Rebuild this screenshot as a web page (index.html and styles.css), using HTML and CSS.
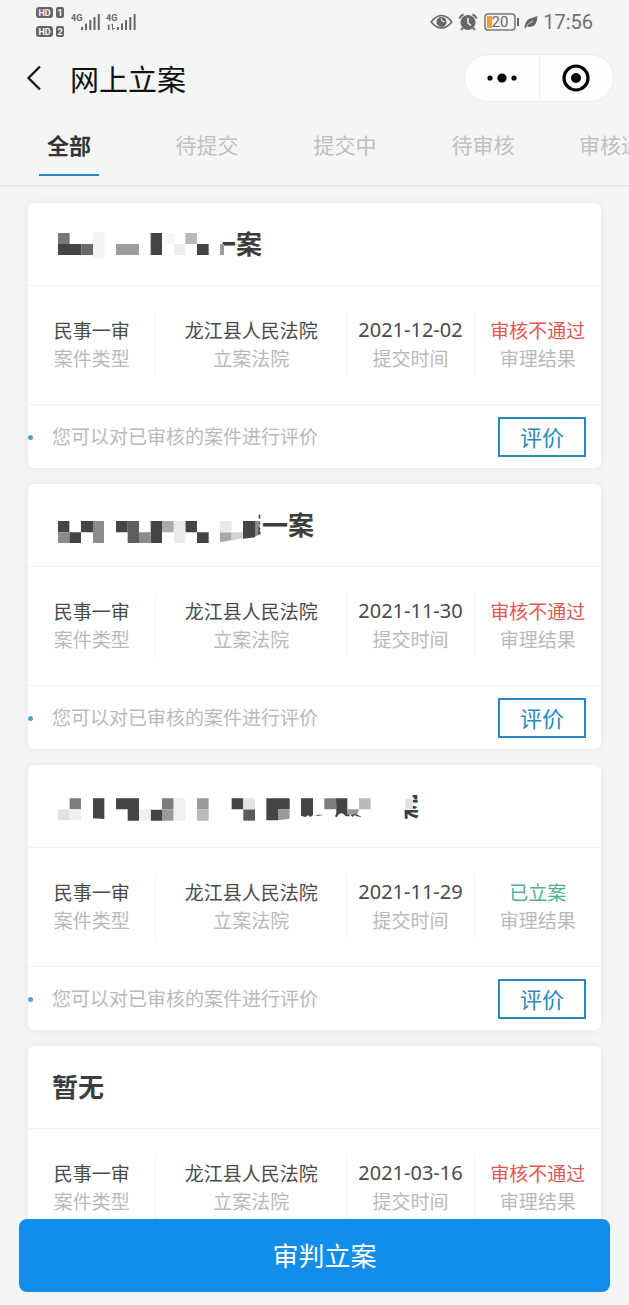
FILE: index.html
```html
<!DOCTYPE html>
<html lang="zh-CN">
<head>
  <meta charset="UTF-8">
  <meta name="viewport" content="width=device-width, initial-scale=1">
  <title>网上立案</title>
  <link rel="stylesheet" href="styles.css">
</head>
<body>
  <div class="status-bar">
    <svg class="status-left" width="102" height="32" viewBox="36 5 102 32" aria-hidden="true">
      <rect x="36" y="6" width="17" height="11" rx="3"/>
      <rect x="56" y="6" width="8" height="11" rx="2"/>
      <rect x="36" y="25" width="17" height="11" rx="3"/>
      <rect x="56" y="25" width="8" height="11" rx="2"/>
      <g class="badge-text">
        <text x="44.5" y="15">HD</text>
        <text x="60" y="15">1</text>
        <text x="44.5" y="34">HD</text>
        <text x="60" y="34">2</text>
      </g>
      <g class="net-text">
        <text x="71" y="20">4G</text>
        <text x="106" y="20">4G</text>
      </g>
      <path class="bars" d="M82 26v3M86 22.500v6.500M90.300 19v10M94.500 16v13M98.800 13v16"/>
      <path class="bars" d="M118 26v3M122 22.500v6.500M126 19v10M130.300 16v13M134.600 13v16"/>
      <path d="M107 25l2.500-2v6h-1.500v-4zM111.500 23h1.500v4h2l-2.500 2.500z"/>
    </svg>
    <div class="status-right">
      <svg width="23" height="16" viewBox="0 0 23 16" aria-hidden="true">
        <path d="M1.200 8Q6 1.500 11.500 1.500T21.800 8Q17 14 11.500 14T1.200 8z" fill="none" stroke="#666" stroke-width="1.600"/>
        <circle cx="11.500" cy="8" r="5"/>
        <path d="M11.500 4.500a2.500 2.500 0 0 0 3 3" fill="none" stroke="#f5f5f5" stroke-width="1.200"/>
      </svg>
      <svg width="20" height="18" viewBox="0 0 20 18" aria-hidden="true">
        <circle cx="10" cy="9.500" r="7.500"/>
        <path d="M1.500 5.500Q2.500 2.500 5.500 1.500M14.500 1.500Q17.500 2.500 18.500 5.500M5 14.500l-2 2.500M15 14.500l2 2.500" fill="none" stroke="#666" stroke-width="2"/>
        <path d="M10 5v5l3 2.500" fill="none" stroke="#f5f5f5" stroke-width="1.600"/>
      </svg>
      <svg class="battery" width="36" height="18" viewBox="0 0 36 18" aria-hidden="true">
        <rect x="2" y="1" width="30" height="16" rx="3" fill="none" stroke="#777" stroke-width="1.500"/>
        <rect x="4" y="3" width="5" height="12" fill="#eda13c"/>
        <rect x="34" y="5" width="2" height="8"/>
        <text x="17" y="14">20</text>
      </svg>
      <svg width="14" height="14" viewBox="0 0 14 14" aria-hidden="true">
        <path d="M13.500 1Q13 12 6 12Q4 12 3 11L1.500 13.500L.5 13Q1 5.500 6 3.500Q9 2.800 13.500 1z"/>
        <path d="M3 10.500Q5.500 7.500 9 6" fill="none" stroke="#f5f5f5" stroke-width=".8"/>
      </svg>
      <span class="clock">17:56</span>
    </div>
  </div>

  <header class="nav-bar">
    <button class="back" type="button" aria-label="返回">
      <svg width="16" height="26" viewBox="0 0 16 26"><path d="M14 1.500L2.500 13L14 24.500" fill="none" stroke="#111" stroke-width="2.200"/></svg>
    </button>
    <h1>网上立案</h1>
    <div class="capsule">
      <button type="button" aria-label="更多">
        <svg width="30" height="10" viewBox="0 0 30 10"><circle cx="3" cy="5" r="2.600"/><circle cx="15" cy="5" r="4.600"/><circle cx="27" cy="5" r="2.600"/></svg>
      </button>
      <button type="button" aria-label="关闭">
        <svg width="28" height="28" viewBox="0 0 28 28"><circle cx="14" cy="14" r="12" fill="none" stroke="#000" stroke-width="3.200"/><circle cx="14" cy="14" r="5"/></svg>
      </button>
    </div>
  </header>

  <nav class="tabs">
    <a href="#" class="tab active">全部</a>
    <a href="#" class="tab">待提交</a>
    <a href="#" class="tab">提交中</a>
    <a href="#" class="tab">待审核</a>
    <a href="#" class="tab">审核通过</a>
  </nav>

  <main class="case-list">
    <article class="card">
      <h2 class="card-title">
        <svg class="mask" width="170" height="36" viewBox="96 90 510 108" aria-hidden="true">
          <rect x="96" y="90" width="512" height="108" fill="#fff"/>
          <path fill="#777" d="M114 114h35v33h-35z"/>
          <path fill="#444" d="M114 147h70v33h-70zM392 114h34v66h-34zM531 147h35v33h-35z"/>
          <path fill="#686868" d="M184 147h35v33h-35z"/>
          <path fill="#f5f5f5" d="M219 110h35v80h-35zM440 114h22v33h-22z"/>
          <path fill="#9d9d9d" d="M288 147h69v33h-69zM600 147h12v33h-12z"/>
          <path fill="#b8b8b8" d="M496 114h35v33h-35z"/>
          <path fill="#eee" d="M462 147h34v33h-34z"/>
        </svg>
        <span>一案</span>
      </h2>
      <dl class="info">
        <div class="cell"><dd>民事一审</dd><dt>案件类型</dt></div>
        <div class="cell"><dd>龙江县人民法院</dd><dt>立案法院</dt></div>
        <div class="cell"><dd class="date">2021-12-02</dd><dt>提交时间</dt></div>
        <div class="cell"><dd class="rejected">审核不通过</dd><dt>审理结果</dt></div>
      </dl>
      <div class="card-footer">
        <p>您可以对已审核的案件进行评价</p>
        <button class="rate" type="button">评价</button>
      </div>
    </article>

    <article class="card">
      <h2 class="card-title">
        <svg class="mask" width="222" height="36" viewBox="96 78 666 108" aria-hidden="true">
          <path fill="#444" d="M114 123h34v34h-34zM148 157h35v32h-35zM183 123h36v34h-36zM288 123h35v34h-35zM392 123h34v66h-34zM496 123h35v34h-35zM531 157h35v32h-35zM669 123h36v49l-36 4z"/>
          <path fill="#8b8b8b" d="M114 157h34v32h-34zM219 123h33v66h-33zM357 157h35v32h-35zM705 123h14v40l-14 7z"/>
          <path fill="#5d5d5d" d="M323 123h34v66h-34z"/>
          <path fill="#aaa" d="M426 123h35v34h-35zM600 157h35v24l-35 6z"/>
          <path fill="#eaeaea" d="M462 123h34v66h-34zM600 123h35v34h-35z"/>
          <path fill="#d2d2d2" d="M635 157h34v18l-34 6z"/>
          <path fill="#444" d="M716 104h5v12h-5zM717 124l5 6-5 4zM716 138l6 8-4 4 5 10-8 6z"/>
        </svg>
        <span>一案</span>
      </h2>
      <dl class="info">
        <div class="cell"><dd>民事一审</dd><dt>案件类型</dt></div>
        <div class="cell"><dd>龙江县人民法院</dd><dt>立案法院</dt></div>
        <div class="cell"><dd class="date">2021-11-30</dd><dt>提交时间</dt></div>
        <div class="cell"><dd class="rejected">审核不通过</dd><dt>审理结果</dt></div>
      </dl>
      <div class="card-footer">
        <p>您可以对已审核的案件进行评价</p>
        <button class="rate" type="button">评价</button>
      </div>
    </article>

    <article class="card">
      <h2 class="card-title">
        <svg class="mask" width="353" height="36" viewBox="96 81 1059 108" aria-hidden="true">
          <path fill="#fff" d="M96 81h1082v69h-24v42h-1058z"/>
          <path fill="#444" d="M219 115h34v62l-34-2zM288 115h69v67h-34v-34h-35zM392 149h34v33h-34zM635 115h35v33h-35zM739 115h70v33h-35v33h-35zM843 115h36v50l-8 6-7-5-8 5-13-4zM948 115h34v40l8 14h-12l-12-10-10 4-6 9-5-3 4-10z"/>
          <path fill="#7d7d7d" d="M149 115h34v33h-34zM426 115h35v33h-35zM913 115h35v33h-35z"/>
          <path fill="#999" d="M426 148h35v34h-35zM531 115h35v33h-35zM774 148h35v28l-35 5zM982 148h35l-5 16h-30z"/>
          <path fill="#5b5b5b" d="M670 148h35v34h-35z"/>
          <path fill="#bababa" d="M531 148h35v34h-35zM1017 115h35v33h-35z"/>
          <path fill="#e2e2e2" d="M114 148h35v33h-35zM670 115h35v33h-35zM1156 116h22v32h-22z"/>
          <path fill="#f0f0f0" d="M149 148h34v33h-34zM357 148h35v33h-35zM461 115h35v67h-35z"/>
          <path fill="#444" d="M886 166l14-2 10 1-18 3zM992 166l12-4 8 2 14 7-16-2-6-4-6 6z"/>
        </svg>
        <span>案</span>
      </h2>
      <dl class="info">
        <div class="cell"><dd>民事一审</dd><dt>案件类型</dt></div>
        <div class="cell"><dd>龙江县人民法院</dd><dt>立案法院</dt></div>
        <div class="cell"><dd class="date">2021-11-29</dd><dt>提交时间</dt></div>
        <div class="cell"><dd class="accepted">已立案</dd><dt>审理结果</dt></div>
      </dl>
      <div class="card-footer">
        <p>您可以对已审核的案件进行评价</p>
        <button class="rate" type="button">评价</button>
      </div>
    </article>

    <article class="card">
      <h2 class="card-title">暂无</h2>
      <dl class="info">
        <div class="cell"><dd>民事一审</dd><dt>案件类型</dt></div>
        <div class="cell"><dd>龙江县人民法院</dd><dt>立案法院</dt></div>
        <div class="cell"><dd class="date">2021-03-16</dd><dt>提交时间</dt></div>
        <div class="cell"><dd class="rejected">审核不通过</dd><dt>审理结果</dt></div>
      </dl>
    </article>
  </main>

  <footer class="bottom-bar">
    <button class="submit" type="button">审判立案</button>
  </footer>
</body>
</html>
```
FILE: styles.css
```css
:root {
  --page: #f5f5f5;
  --line: #f3f3f3;
  --blue: #2b87bd;
  --muted: #b9b9b9;
}
* {
  box-sizing: border-box;
}
body {
  margin: 0;
  height: 100vh;
  display: flex;
  flex-direction: column;
  overflow: hidden;
  background: var(--page);
  color: #4a4a4a;
  font-family: "Noto Sans CJK SC", sans-serif;
}
h1, h2, p, dl, dd {
  margin: 0;
}
button {
  padding: 0;
  border: none;
  background: none;
  font-family: inherit;
  cursor: pointer;
}
svg {
  display: block;
  flex: none;
}

/* status bar */
.status-bar {
  flex: none;
  display: flex;
  justify-content: space-between;
  align-items: center;
  height: 43px;
  padding: 0 36px;
  fill: #666;
}
.badge-text {
  fill: var(--page);
  font: bold 9px Roboto, sans-serif;
  text-anchor: middle;
}
.net-text {
  font: bold 9px Roboto, sans-serif;
}
.bars {
  stroke: #666;
  stroke-width: 2;
}
.status-right {
  display: flex;
  align-items: center;
  gap: 5px;
}
.battery text {
  font: 15px Roboto, sans-serif;
  text-anchor: middle;
}
.clock {
  color: #707070;
  font: 20px/24px Roboto, sans-serif;
}

/* title bar */
.nav-bar {
  flex: none;
  display: flex;
  align-items: center;
  height: 70px;
  padding: 0 15px 0 26px;
}
.nav-bar h1 {
  margin-left: 28px;
  color: #111;
  font-size: 29px;
  line-height: 40px;
  font-weight: 400;
}
.capsule {
  display: flex;
  width: 150px;
  height: 48px;
  margin-left: auto;
  border: 1px solid #ebebeb;
  border-radius: 24px;
  background: #fefefe;
}
.capsule button {
  flex: 1;
  display: flex;
  align-items: center;
  justify-content: center;
}
.capsule button + button {
  border-left: 1px solid #f0f0f0;
}

/* tabs */
.tabs {
  flex: none;
  display: flex;
  overflow: hidden;
  padding-bottom: 9px;
  border-bottom: 2px solid #e9e9e9;
}
.tab {
  position: relative;
  flex: 0 0 138px;
  padding: 16px 0 17px;
  color: #c0c0c0;
  font-size: 21px;
  line-height: 30px;
  text-align: center;
  text-decoration: none;
}
.tab.active {
  color: #333;
  font-size: 22px;
  font-weight: bold;
}
.tab.active::after {
  content: "";
  position: absolute;
  left: 50%;
  bottom: 0;
  width: 60px;
  height: 2px;
  margin-left: -30px;
  background: var(--blue);
}

/* cards */
.case-list {
  flex: 1;
  min-height: 0;
  overflow-y: auto;
  scrollbar-width: none;
  display: flex;
  flex-direction: column;
  gap: 16px;
  padding: 16px 28px 0;
}
.card {
  flex: none;
  border-radius: 6px;
  background: #fff;
  box-shadow: 0 0 8px rgba(0, 0, 0, 0.06);
}
.card-title {
  display: flex;
  padding: 22px 24px 24px;
  border-bottom: 1px solid var(--line);
  color: #3c3c3c;
  font-size: 26px;
  line-height: 36px;
  font-weight: bold;
}
.mask {
  position: relative;
  margin-right: -12px;
  overflow: visible;
}
.info {
  display: grid;
  grid-template-columns: 2fr 3fr 2fr 2fr;
  padding: 26px 0;
}
.cell {
  padding: 4px 0 6px;
  font-size: 19px;
  line-height: 28px;
  text-align: center;
  white-space: nowrap;
}
.cell + .cell {
  border-left: 1px solid var(--line);
}
.cell dt {
  color: var(--muted);
}
.cell .date {
  font-family: "Noto Sans", sans-serif;
  font-size: 20px;
}
.cell .rejected {
  color: #df5754;
}
.cell .accepted {
  color: #4db18c;
}
.card-footer {
  position: relative;
  display: flex;
  align-items: center;
  justify-content: space-between;
  height: 64px;
  padding: 0 15px 0 24px;
  border-top: 1px solid var(--line);
}
.card-footer::before {
  content: "";
  position: absolute;
  left: 0;
  top: 30px;
  width: 5px;
  height: 5px;
  border-radius: 50%;
  background: #4fa3d1;
}
.card-footer p {
  padding-bottom: 2px;
  color: var(--muted);
  font-size: 19px;
  line-height: 28px;
}
.rate {
  width: 88px;
  height: 40px;
  padding-bottom: 2px;
  border: 2px solid var(--blue);
  color: var(--blue);
  font-size: 22px;
  line-height: 32px;
}

/* bottom button */
.bottom-bar {
  flex: none;
  padding: 0 19px 13px;
}
.submit {
  display: block;
  width: 100%;
  height: 73px;
  padding: 0 0 2px 20px;
  border-radius: 8px;
  background: #128de9;
  color: #fff;
  font-size: 26px;
}
```
